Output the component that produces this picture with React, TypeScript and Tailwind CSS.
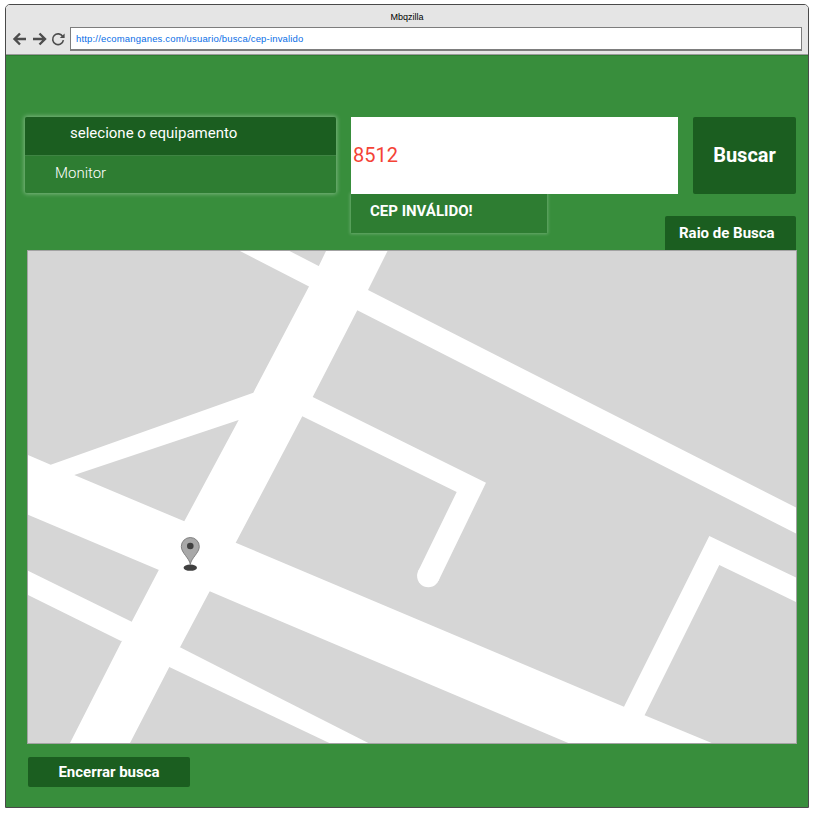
import React from "react";

const roboto = "font-['Roboto',sans-serif]";
const arial = "font-['Liberation_Sans',Arial,sans-serif]";

function MapArt() {
  return (
    <svg viewBox="28 251 768 492" className="block w-[768px] h-[492px]">
      <rect x="28" y="251" width="768" height="492" fill="#d6d6d6" />
      <g fill="#ffffff">
        <polygon points="326,251 387.5,251 368,290 357.3,310.3 312.7,397 302.3,416.3 235.7,542.7 209.7,591.3 180,647.3 169.3,667 130,743 70,743 131.7,621.7 184.3,521.3 253.3,392.7 309,286.5" />
        <polygon points="240,251 289.5,251 340,277 325,300 309,286.5" />
        <polygon points="368,290 796,507.5 796,533.5 357.3,310.3 340,300 350,280" />
        <polygon points="28,455 50.7,464.7 253.3,392.7 270,400 250,425 238.7,420 74.3,475 184.3,521.3 175,560 159,570 28,514.7" />
        <polygon points="170,530 184.3,521.3 235.7,542.7 624,706.7 711.7,743 568.3,743 209.7,591.3 190,600" />
        <polygon points="28,570.7 131.7,621.7 145,635 121,641 28,595" />
        <polygon points="180,647.3 368.3,743 329.3,743 169.3,667 155,650" />
        <polygon points="619.3,716 624,706.7 709.3,536 796,577.5 796,602 719.3,565 644.3,715.7 639.6,725" />
        <polygon points="295,390 312.7,397 486,482.7 438.4,581 418.2,571 456.7,492 302.3,416.3 285,412" />
        <circle cx="428.3" cy="576" r="11.2" />
      </g>
      <g>
        <ellipse cx="190.3" cy="567.7" rx="6.7" ry="3.1" fill="#404040" />
        <path
          d="M190.3 564.5 C189.5 558 181.3 553 181.3 546.5 A9 9 0 0 1 199.3 546.5 C199.3 553 191.1 558 190.3 564.5 Z"
          fill="#a8a8a8"
          stroke="#777777"
          strokeWidth="0.9"
        />
        <circle cx="190.3" cy="546" r="3.3" fill="#404040" />
      </g>
    </svg>
  );
}

export default function App() {
  return (
    <div className="w-[824px] h-[815px] bg-white pt-[4px] pl-[5px]">
      <div className="w-[804px] h-[804px] border border-[#4a4a4a] rounded-t-[5px] overflow-hidden flex flex-col">
        <div className="h-[50px] bg-[#e5e5e5] border-b border-[#9a9a9a] flex flex-col shrink-0">
          <div className={`${arial} text-[9px] leading-[11px] text-black text-center pt-[7px] h-[22px]`}>Mbqzilla</div>
          <div className="flex items-center pl-[6px] pr-[6px]">
            <svg width="53" height="18" viewBox="0 0 53 18" className="shrink-0">
              <g fill="none" stroke="#4d4d4d" strokeWidth="2.4">
                <path d="M14 9 H3 M8 3.5 L2.5 9 L8 14.5" />
                <path d="M21 9 H33 M27.5 3.5 L33 9 L27.5 14.5" />
              </g>
              <path d="M50.8 6.6 A5.4 5.4 0 1 0 51.4 10.2" fill="none" stroke="#4d4d4d" strokeWidth="1.6" />
              <path d="M47.8 8 H52.6 V3.4 Z" fill="#4d4d4d" />
            </svg>
            <div className="ml-[5px] w-[733px] h-[24px] bg-white border border-[#7d7d7d] border-b-2 flex items-center pl-[5px] pt-[2px]">
              <span className={`${arial} text-[9.5px] tracking-[0.17px] text-[#0a6ee6]`}>http://ecomanganes.com/usuario/busca/cep-invalido</span>
            </div>
          </div>
        </div>

        <div className={`${roboto} flex-1 bg-[#388e3c] border-t border-[#2e7d32] flex flex-col`}>
          <div className="flex pt-[61px] pl-[19px]">
            <div className="w-[311px] h-[76px] rounded-[2px] overflow-hidden shadow-[0_0_4px_1px_rgba(255,255,255,0.35)]">
              <div className="h-[39px] bg-[#1b5e20] border-b border-[#3f8443] flex items-center pl-[45px] pb-[5px] text-[15px] text-white">selecione o equipamento</div>
              <div className="h-[37px] bg-[#2e7d32] flex items-center pl-[30px] pb-[3px] text-[15px] font-light text-white">Monitor</div>
            </div>
            <div className="ml-[15px] w-[327px] h-[77px] bg-white flex items-center pl-[2px] pb-[2px] text-[20px] text-[#f44336]">8512</div>
            <div className="ml-[15px] w-[103px] h-[77px] bg-[#1b5e20] rounded-[2px] flex items-center justify-center pb-[2px] text-[20px] font-bold text-white">Buscar</div>
          </div>

          <div className="flex h-[56px] pl-[345px]">
            <div className="w-[196px] h-[39px] bg-[#2e7d32] shadow-[0_0_3px_1px_rgba(255,255,255,0.25)] flex items-center pl-[19px] pb-[4px] text-[15px] font-bold text-white">CEP INVÁLIDO!</div>
            <div className="ml-[118px] mt-[22px] w-[131px] h-[34px] bg-[#1b5e20] rounded-t-[2px] flex items-center pl-[14px] text-[15px] font-bold text-white">Raio de Busca</div>
          </div>

          <div className="ml-[21px] w-[770px] h-[494px] border border-[#a3a3a3] shrink-0">
            <MapArt />
          </div>

          <div className="ml-[22px] mt-[13px] w-[162px] h-[30px] bg-[#1b5e20] rounded-[2px] flex items-center justify-center text-[15px] font-bold text-white">Encerrar busca</div>
        </div>
      </div>
    </div>
  );
}
